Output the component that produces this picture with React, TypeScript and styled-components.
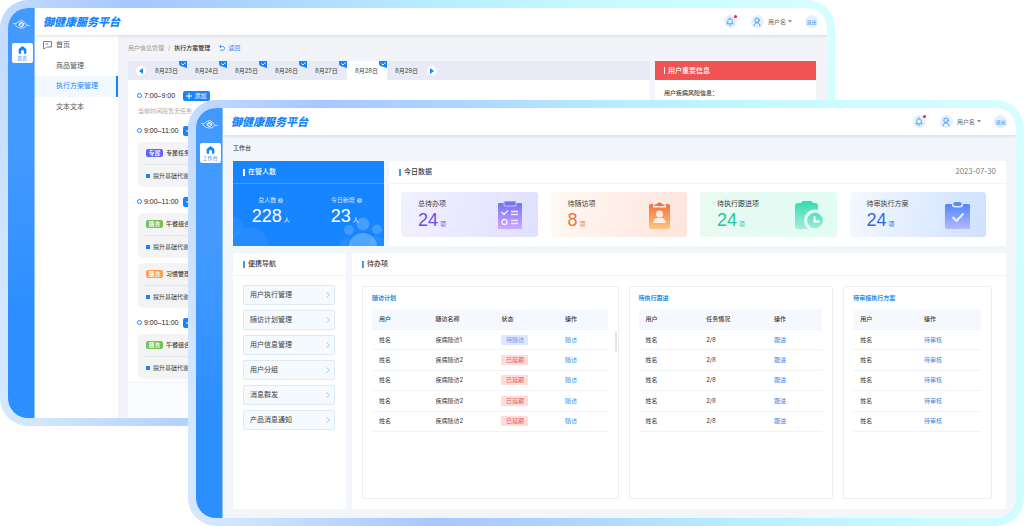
import React from "react";
import styled, { createGlobalStyle } from "styled-components";

const GlobalStyle = createGlobalStyle`
  *, *::before, *::after { box-sizing: border-box; }
  body {
    margin: 0;
    background: #fff;
    color: #3a3a3a;
    font: 6px/10px Inter, "Noto Sans CJK SC", sans-serif;
  }
  a { color: inherit; text-decoration: none; }
  button { font: inherit; color: inherit; border: 0; background: none; padding: 0; cursor: pointer; }
  h1, h2, h3, p, ul { margin: 0; padding: 0; font: inherit; list-style: none; }
  svg { display: block; flex: none; }
`;

const blue = "#1785ff";

/* ---------- Window frame ---------- */

const Stage = styled.div`
  display: grid;
  grid-template-columns: 188px minmax(0, 1fr) 189px;
  grid-template-rows: 100px minmax(326px, auto) 100px;
`;

const Frame = styled.div<{ $front?: boolean }>`
  grid-area: ${(p) => (p.$front ? "2 / 2 / 4 / 4" : "1 / 1 / 3 / 3")};
  z-index: ${(p) => (p.$front ? 1 : 0)};
  display: grid;
  padding: 8px;
  border-radius: 28px;
  background: linear-gradient(75deg, #d4e8ff 0%, #d0e5ff 5%, #a6c7ff 26%, #aed8ff 42%, #b9edff 58%, #c8fbff 77%, #d6feff 100%);
`;

const Screen = styled.div`
  display: flex;
  min-width: 0;
  overflow: hidden;
  border-radius: 20px;
  background: #f2f5fa;
`;

const Rail = styled.nav`
  display: flex;
  flex-direction: column;
  align-items: center;
  gap: 14px;
  flex: 0 0 27px;
  padding-top: 12px;
  background: linear-gradient(#429aff 35%, #2d8eff 75%);
  border-right: 1px solid #8fc3ff;
`;

const RailLink = styled.a`
  display: flex;
  flex-direction: column;
  align-items: center;
  justify-content: center;
  gap: 1px;
  width: 21px;
  height: 20px;
  margin-left: 2px;
  border-radius: 2px;
  background: #fff;
  color: ${blue};
  font-size: 5px;
  line-height: 6px;
`;

const Page = styled.div`
  display: flex;
  flex-direction: column;
  flex: 1;
  min-width: 0;
`;

const TopBar = styled.header`
  display: flex;
  align-items: center;
  flex: 0 0 27px;
  padding: 0 9px 0 8px;
  background: #fff;
  box-shadow: 0 1px 3px rgba(40, 60, 110, 0.16);
  z-index: 1;
`;

const Brand = styled.h1`
  flex: 1;
  color: ${blue};
  font-size: 11px;
  line-height: 16px;
  font-weight: 900;
  font-style: italic;
`;

const RoundButton = styled.button`
  position: relative;
  display: grid;
  place-items: center;
  width: 13px;
  height: 13px;
  border-radius: 50%;
  background: #e3f0ff;
  color: #2f8ffb;
  font-size: 5px;
  line-height: 6px;
  white-space: nowrap;
`;

const Dot = styled.span`
  position: absolute;
  top: 0;
  right: 0;
  width: 3px;
  height: 3px;
  border-radius: 50%;
  background: #f5222d;
`;

const Account = styled.div`
  display: flex;
  align-items: center;
  gap: 4px;
  margin: 0 13px 0 14px;
  color: #666;
`;

const NameButton = styled.button`
  display: flex;
  align-items: center;
  gap: 2px;
  color: #666;
`;

const EyeLogo = () => (
  <svg width="17" height="9" viewBox="0 0 34 18" fill="none" stroke="#fff" strokeLinecap="round" aria-hidden="true">
    <path d="M1 7c5 1 6 0 9-3 5-4 12-3 14 2 2 4 5 6 9 5" strokeWidth="1.6" opacity=".9" />
    <path d="M3 9c4 4 8 7 14 7 5 0 8-2 10-5" strokeWidth="1.6" opacity=".9" />
    <path d="M12 9c0-3 3-4.500 6-4 4 .5 5 5 2 7-3 1.600-7 .5-7-2 0-2 2-3 4-2.700 2 .3 2.500 2 1 3" strokeWidth="2" />
  </svg>
);

const HomeIcon = () => (
  <svg width="9" height="8" viewBox="0 0 18 16" fill={blue} aria-hidden="true">
    <path d="M9 .5c.6 0 1 .2 1.400.5l5.500 4.600c.5.4.8 1 .8 1.600V14c0 .8-.6 1.500-1.500 1.500H12V11c0-1.700-1.300-3-3-3s-3 1.300-3 3v4.500H2.800c-.9 0-1.500-.7-1.500-1.500V7.200c0-.6.3-1.200.8-1.600L7.600 1C8 .7 8.400.5 9 .5z" />
  </svg>
);

const BellIcon = () => (
  <svg width="8" height="9" viewBox="0 0 16 18" fill="none" stroke="currentColor" strokeWidth="1.500" aria-hidden="true">
    <path d="M3.500 13V8a4.500 4.500 0 0 1 9 0v5M1.500 13.500h13M8 1.500v2M6.500 16h3" strokeLinecap="round" />
  </svg>
);

const PersonIcon = () => (
  <svg width="8" height="10" viewBox="0 0 16 20" fill="none" stroke="currentColor" strokeWidth="1.700" strokeLinecap="round" aria-hidden="true">
    <circle cx="8" cy="6.500" r="4.500" />
    <path d="M2 18c.3-4 2.500-6.500 6-6.500s5.700 2.500 6 6.500" />
  </svg>
);

const Caret = () => (
  <svg width="4" height="3" viewBox="0 0 4 3" fill="#888" aria-hidden="true">
    <path d="M0 0h4L2 2.500z" />
  </svg>
);

const Shell = ({ front, railLabel, children }: { front?: boolean; railLabel: string; children: React.ReactNode }) => (
  <Frame $front={front}>
    <Screen>
      <Rail>
        <EyeLogo />
        <RailLink href="#home">
          <HomeIcon />
          {railLabel}
        </RailLink>
      </Rail>
      <Page>
        <TopBar>
          <Brand>御健康服务平台</Brand>
          <RoundButton aria-label="通知">
            <BellIcon />
            <Dot />
          </RoundButton>
          <Account>
            <RoundButton aria-label="账户">
              <PersonIcon />
            </RoundButton>
            <NameButton>
              用户名
              <Caret />
            </NameButton>
          </Account>
          <RoundButton>退出</RoundButton>
        </TopBar>
        {children}
      </Page>
    </Screen>
  </Frame>
);

/* ---------- Plan management (back window) ---------- */

const PlanLayout = styled.div`
  display: flex;
  flex: 1;
  min-height: 0;
  background: #f3f4fa;
`;

const SideMenu = styled.nav`
  flex: 0 0 83px;
  background: #fff;
`;

const MenuList = styled.ul`
  display: grid;
  grid-auto-rows: 1fr;
  height: 82px;
`;

const MenuLink = styled.a<{ $active?: boolean }>`
  display: grid;
  grid-template-columns: 13px 1fr;
  align-items: center;
  height: 100%;
  padding-left: 8px;
  font-size: 7px;
  color: ${(p) => (p.$active ? blue : "#555")};
  background: ${(p) => (p.$active ? "#f2f8ff" : "transparent")};
  border-right: 2px solid ${(p) => (p.$active ? blue : "transparent")};
  span { grid-column: 2; }
`;

const PlanMain = styled.main`
  display: flex;
  flex-direction: column;
  flex: 1;
  min-width: 0;
  padding: 0 11px 0 10px;
`;

const Crumbs = styled.nav`
  display: flex;
  align-items: center;
  gap: 4px;
  height: 26px;
  color: #999;
  strong { color: #333; font-weight: 500; }
`;

const BackLink = styled.a`
  display: flex;
  align-items: center;
  gap: 3px;
  margin-left: 5px;
  color: #3a93f8;
`;

const PlanColumns = styled.div`
  display: grid;
  grid-template-columns: minmax(0, 1fr) 161px;
  gap: 5px;
  flex: 1;
`;

const Sheet = styled.section`
  display: flex;
  flex-direction: column;
  background: #fff;
`;

const DayBar = styled.div`
  display: flex;
  align-items: center;
  height: 19px;
  padding-left: 8px;
  background: #e8ebf5;
`;

const DayTab = styled.button<{ $active?: boolean }>`
  position: relative;
  width: 40px;
  height: 19px;
  padding-left: 8px;
  text-align: left;
  color: #444;
  background: ${(p) => (p.$active ? "#fff" : "transparent")};
  svg { position: absolute; top: 0; right: 0; }
`;

const StepButton = styled.button`
  display: grid;
  place-items: center;
  width: 10px;
  height: 10px;
  margin: 0 1px 0 0;
  border-radius: 50%;
  background: #fff;
`;

const Timeline = styled.div`
  display: flex;
  flex-direction: column;
  gap: 9px;
  padding: 10px 10px 3px;
`;

const SlotHead = styled.div`
  display: grid;
  grid-template-columns: 6px 39px auto 1fr;
  align-items: center;
  height: 11px;
  font: 7px/11px "Liberation Sans", "Noto Sans CJK SC", sans-serif;
  color: #222;
`;

const Ring = styled.i`
  width: 5px;
  height: 5px;
  border: 1px solid ${blue};
  border-radius: 50%;
  margin-left: -1px;
`;

const AddButton = styled.button`
  display: flex;
  align-items: center;
  justify-content: center;
  gap: 2px;
  width: 27px;
  height: 10px;
  border-radius: 2px;
  background: ${blue};
  color: #fff;
  font: 6px/10px "Noto Sans CJK SC", sans-serif;
`;

const SlotNote = styled.p`
  margin-top: 5px;
  color: #aaa;
`;

const TaskList = styled.ul`
  display: grid;
  gap: 5px;
  margin-top: 6px;
`;

const TaskCard = styled.li`
  height: 45px;
  padding: 0 6px;
  border-radius: 5px;
  background: #f4f4f7;
`;

const TaskRow = styled.div`
  display: flex;
  align-items: center;
  gap: 3px;
  height: 22px;
  padding-left: 2px;
  font-weight: 500;
  & + & { border-top: 1px solid #e6e6ea; font-weight: 400; height: 23px; }
`;

const Tag = styled.span<{ $color: string }>`
  width: 17px;
  height: 8px;
  border-radius: 2px;
  background: ${(p) => p.$color};
  color: #fff;
  font-size: 6px;
  line-height: 8px;
  text-align: center;
`;

const Square = styled.i`
  width: 4px;
  height: 4px;
  background: ${blue};
`;

const SheetFoot = styled.div`
  flex: 1;
  border-top: 1px solid #edf2fa;
  background: #fafcff;
`;

const AlertHead = styled.h2`
  display: flex;
  align-items: center;
  gap: 3px;
  height: 19px;
  padding-left: 9px;
  background: #ef5354;
  color: #fff;
  font-size: 7px;
  font-weight: 500;
  &::before { content: ""; width: 1px; height: 7px; background: #fff; }
`;

const AlertText = styled.p`
  padding: 8px 9px;
  font-weight: 500;
`;

const Flag = () => (
  <svg width="8" height="7" viewBox="0 0 16 14" aria-hidden="true">
    <path d="M0 0h16v14L3 10C1 9 0 7 0 5z" fill={blue} />
    <path d="M5 5l3 3 5-5" fill="none" stroke="#fff" strokeWidth="1.800" />
  </svg>
);

const Arrow = ({ flip }: { flip?: boolean }) => (
  <svg width="4" height="6" viewBox="0 0 4 6" fill={blue} aria-hidden="true">
    <path d={flip ? "M0 0l4 3-4 3z" : "M4 0L0 3l4 3z"} />
  </svg>
);

const PlusIcon = () => (
  <svg width="6" height="6" viewBox="0 0 6 6" stroke="#fff" aria-hidden="true">
    <path d="M3 0v6M0 3h6" />
  </svg>
);

const menu = ["首页", "商品管理", "执行方案管理", "文本文本"];
const days = ["8月23日", "8月24日", "8月25日", "8月26日", "8月27日", "8月28日", "8月29日"];
const slots = [
  { time: "7:00–9:00", tasks: [] },
  { time: "9:00–11:00", tasks: [{ tag: "专属", color: "#5b63ff", name: "专属任务" }] },
  {
    time: "9:00–11:00",
    tasks: [
      { tag: "膳食", color: "#6dc252", name: "午餐组合" },
      { tag: "膳食", color: "#ff9c50", name: "习惯管理" },
    ],
  },
  { time: "9:00–11:00", tasks: [{ tag: "膳食", color: "#6dc252", name: "午餐组合" }] },
];

const PlanWindow = () => (
  <Shell railLabel="首页">
    <PlanLayout>
      <SideMenu>
        <MenuList>
          {menu.map((m, i) => (
            <li key={m}>
              <MenuLink href="#menu" $active={i === 2}>
                {i === 0 && (
                  <svg width="9" height="8" viewBox="0 0 18 16" fill="none" stroke="#555" strokeWidth="1.500" aria-hidden="true">
                    <path d="M1 1h16v11H7l-3 3H1zM5 6h5" />
                  </svg>
                )}
                <span>{m}</span>
              </MenuLink>
            </li>
          ))}
        </MenuList>
      </SideMenu>
      <PlanMain>
        <Crumbs>
          <a href="#users">用户信息管理</a>
          <span>/</span>
          <strong>执行方案管理</strong>
          <BackLink href="#back">
            <svg width="6" height="6" viewBox="0 0 12 12" fill="none" stroke="currentColor" strokeWidth="1.800" aria-hidden="true">
              <path d="M4 0L1 3l3 3M1 3h6.500a3.500 3.500 0 0 1 0 7.500H2" />
            </svg>
            返回
          </BackLink>
        </Crumbs>
        <PlanColumns>
          <Sheet>
            <DayBar>
              <StepButton aria-label="前一天">
                <Arrow />
              </StepButton>
              {days.map((d, i) => (
                <DayTab key={d} $active={i === 5}>
                  {d}
                  {i < 6 && <Flag />}
                </DayTab>
              ))}
              <StepButton aria-label="后一天">
                <Arrow flip />
              </StepButton>
            </DayBar>
            <Timeline>
              {slots.map((s, i) => (
                <section key={i}>
                  <SlotHead>
                    <Ring />
                    {s.time}
                    <AddButton>
                      <PlusIcon />
                      添加
                    </AddButton>
                  </SlotHead>
                  {s.tasks.length === 0 ? (
                    <SlotNote>当前时间段暂无任务</SlotNote>
                  ) : (
                    <TaskList>
                      {s.tasks.map((t) => (
                        <TaskCard key={t.name}>
                          <TaskRow>
                            <Tag $color={t.color}>{t.tag}</Tag>
                            {t.name}
                          </TaskRow>
                          <TaskRow>
                            <Square />
                            提升基础代谢
                          </TaskRow>
                        </TaskCard>
                      ))}
                    </TaskList>
                  )}
                </section>
              ))}
            </Timeline>
            <SheetFoot />
          </Sheet>
          <Sheet>
            <AlertHead>用户重要信息</AlertHead>
            <AlertText>用户疾病风险信息：</AlertText>
          </Sheet>
        </PlanColumns>
      </PlanMain>
    </PlanLayout>
  </Shell>
);

/* ---------- Workbench (front window) ---------- */

const Bench = styled.main`
  display: flex;
  flex-direction: column;
  flex: 1;
  padding: 0 10px 9px;
`;

const BenchTitle = styled.h2`
  line-height: 26px;
  font-weight: 500;
`;

const TopRow = styled.div`
  display: grid;
  grid-template-columns: 151px minmax(0, 1fr);
  gap: 5px;
  height: 85px;
`;

const BottomRow = styled.div`
  display: grid;
  grid-template-columns: 113px minmax(0, 1fr);
  gap: 6px;
  flex: 1;
  margin-top: 7px;
`;

const Card = styled.section<{ $solid?: boolean }>`
  position: relative;
  display: flex;
  flex-direction: column;
  overflow: hidden;
  color: ${(p) => (p.$solid ? "#fff" : "#3a3a3a")};
  background: ${(p) => (p.$solid ? blue : "#fff")};
`;

const CardHead = styled.header<{ $solid?: boolean }>`
  display: flex;
  align-items: center;
  gap: 3px;
  height: 23px;
  padding: 0 10px;
  border-bottom: 1px solid ${(p) => (p.$solid ? "#459eff" : "#f3f4f6")};
  font-size: 7px;
  &::before { content: ""; width: 2px; height: 7px; background: ${(p) => (p.$solid ? "#fff" : "#3c9cf5")}; }
  h3 { flex: 1; font-weight: 500; }
  time { color: #777; }
`;

const Counts = styled.div`
  display: grid;
  grid-template-columns: 1fr 1fr;
  justify-items: center;
  padding-top: 11px;
  z-index: 1;
`;

const CountLabel = styled.p`
  display: flex;
  align-items: center;
  justify-content: center;
  gap: 2px;
  color: #d6e9ff;
`;

const Figure = styled.p<{ $fill?: string }>`
  font: 18px/22px "Liberation Sans", sans-serif;
  color: ${(p) => p.$fill || "#fff"};
  small { margin-left: 2px; font: 6px/10px "Noto Sans CJK SC", sans-serif; }
`;

const Backdrop = styled.svg<{ $side: "left" | "right" }>`
  position: absolute;
  bottom: 0;
  ${(p) => p.$side}: 0;
`;

const Stats = styled.div`
  display: grid;
  grid-template-columns: repeat(4, minmax(0, 1fr));
  gap: 13px;
  flex: 1;
  padding: 8px 20px 9px 12px;
`;

const Stat = styled.a<{ $bg: string }>`
  display: flex;
  align-items: center;
  justify-content: space-between;
  padding: 0 14px 0 17px;
  border-radius: 3px;
  background: linear-gradient(100deg, ${(p) => p.$bg});
  font-size: 7px;
`;

const NavList = styled.ul`
  display: grid;
  gap: 5px;
  padding: 9px 11px 0 10px;
`;

const NavLink = styled.a`
  display: flex;
  align-items: center;
  justify-content: space-between;
  height: 20px;
  padding: 0 4px 0 6px;
  border: 1px solid #d9ebfa;
  border-radius: 2px;
  background: #f5faff;
  font-size: 7px;
`;

const Panels = styled.div`
  display: grid;
  grid-template-columns: 257fr 205fr 149fr;
  gap: 10px;
  flex: 1;
  padding: 10px 14px 10px 10px;
`;

const Panel = styled.section`
  position: relative;
  min-width: 0;
  padding: 6px 10px 10px 9px;
  border: 1px solid #eceef1;
  border-radius: 2px;
  h3 { height: 16px; color: #2a8be6; font-weight: 700; }
`;

const Thumb = styled.i`
  position: absolute;
  top: 44px;
  right: 1px;
  width: 2px;
  height: 21px;
  border-radius: 1px;
  background: #e3e5e9;
`;

const Table = styled.table`
  width: 100%;
  height: 123px;
  table-layout: fixed;
  border-collapse: separate;
  border-spacing: 0;
  text-align: left;
  th, td { padding: 0 0 0 7px; border-bottom: 1px solid #f2f3f5; }
  thead, thead tr, th { height: 21px; }
  th { background: #f5f9ff; font-weight: 500; }
  a { color: #2a8be6; }
`;

const Badge = styled.span<{ $late?: boolean }>`
  display: block;
  width: 27px;
  height: 10px;
  border-radius: 1px;
  text-align: center;
  color: ${(p) => (p.$late ? "#e0605f" : "#6a90ee")};
  background: ${(p) => (p.$late ? "#ffdcdc" : "#dfe8ff")};
`;

const InfoDot = () => (
  <svg width="5" height="5" viewBox="0 0 10 10" aria-hidden="true">
    <circle cx="5" cy="5" r="5" fill="#9dcbff" />
    <path d="M4 2.500L7 5 4 7.500" fill="none" stroke="#3c95ff" strokeWidth="1.500" />
  </svg>
);

const Fade = ({ id, from, to }: { id: string; from: string; to: string }) => (
  <defs>
    <linearGradient id={id} x1="0" y1="0" x2="0" y2="1">
      <stop offset="0" stopColor={from} />
      <stop offset="1" stopColor={to} />
    </linearGradient>
  </defs>
);

const ChecklistIcon = () => (
  <svg width="28" height="28" viewBox="0 0 28 28" aria-hidden="true">
    <Fade id="violet" from="#7472f4" to="#cfa9fd" />
    <path d="M3 2h22a1 1 0 0 1 1 1v24a1 1 0 0 1-1 1H3a1 1 0 0 1-1-1V3a1 1 0 0 1 1-1z" fill="url(#violet)" />
    <path d="M8 0h12v5H8z" fill="#7472f4" stroke="#c9c6fb" strokeWidth="1" />
    <g fill="none" stroke="#eeeaff" strokeWidth="1.500">
      <path d="M5.500 11l2.500 2.500 4-4M15 10.500h7M15 13.500h7M15 19.500h7M15 22.500h7" />
      <circle cx="8.500" cy="21" r="2.500" />
    </g>
  </svg>
);

const VisitIcon = () => (
  <svg width="28" height="28" viewBox="0 0 28 28" aria-hidden="true">
    <Fade id="amber" from="#f4703c" to="#ffc67c" />
    <rect x="4" y="3" width="21" height="25" rx="2" fill="url(#amber)" />
    <path d="M8 6.500V4.500c0-1 .8-1.500 1.800-1.500h.7a4 4 0 0 1 8 0h.7c1 0 1.800.5 1.800 1.500v2z" fill="#fdeae3" />
    <path d="M9 5c0-1 1-1.500 2.500-1.500a3.200 3.200 0 0 1 6 0C19 3.500 20 4 20 5z" fill="#f4703c" />
    <circle cx="14.500" cy="13" r="3.500" fill="#fdeee6" />
    <path d="M8.500 22c-.5-2.800 1.500-4.500 4-5h4c2.500.5 4.500 2.200 4 5z" fill="#fdeee6" />
  </svg>
);

const FollowIcon = () => (
  <svg width="28" height="28" viewBox="0 0 28 28" aria-hidden="true">
    <Fade id="mint" from="#2fddb0" to="#a9ecd9" />
    <Fade id="mintClock" from="#4fe0bb" to="#a4ead9" />
    <path d="M6 2a3 3 0 0 1 3-2h6a3 3 0 0 1 3 2h2a3 3 0 0 1 3 3v22a1 1 0 0 1-1 1H3a3 3 0 0 1-3-3V5a3 3 0 0 1 3-3z" fill="url(#mint)" />
    <circle cx="20" cy="19.500" r="11" fill="#e3fbf4" />
    <circle cx="20" cy="19.500" r="7.800" fill="url(#mintClock)" />
    <path d="M19.500 15v5.500h5" fill="none" stroke="#fff" strokeWidth="1.800" />
  </svg>
);

const ReviewIcon = () => (
  <svg width="28" height="28" viewBox="0 0 28 28" aria-hidden="true">
    <Fade id="azure" from="#4f86fb" to="#b3bafc" />
    <rect x="1" y="3" width="25" height="25" rx="1.500" fill="url(#azure)" />
    <rect x="8.500" y=".2" width="10" height="5.600" rx="2.800" fill="#5a8dfb" stroke="#dfe9ff" strokeWidth="1.400" />
    <path d="M8.500 16l4 4 7-7.500" fill="none" stroke="#e8efff" strokeWidth="2" />
  </svg>
);

const stats = [
  { label: "总待办项", value: 24, bg: "#f2f1ff, #dfe0ff", fill: "#6a4df0", icon: <ChecklistIcon /> },
  { label: "待随访项", value: 8, bg: "#fffaf3, #fde4dd", fill: "#f4703c", icon: <VisitIcon /> },
  { label: "待执行跟进项", value: 24, bg: "#eafaf1, #e1fdf5", fill: "#22c79c", icon: <FollowIcon /> },
  { label: "待审执行方案", value: 24, bg: "#f4f8ff, #cfe1ff", fill: "#2f69e6", icon: <ReviewIcon /> },
];

const shortcuts = ["用户执行管理", "随访计划管理", "用户信息管理", "用户分组", "消息群发", "产品消息通知"];
const rows = [1, 2, 3, 4, 5];

const DataTable = ({ heads, widths, cells }: { heads: string[]; widths: string[]; cells: (row: number) => React.ReactNode[] }) => (
  <Table>
    <colgroup>
      {widths.map((w, i) => (
        <col key={i} width={w} />
      ))}
    </colgroup>
    <thead>
      <tr>
        {heads.map((h) => (
          <th key={h} scope="col">{h}</th>
        ))}
      </tr>
    </thead>
    <tbody>
      {rows.map((r) => (
        <tr key={r}>
          {cells(r).map((c, i) => (
            <td key={i}>{c}</td>
          ))}
        </tr>
      ))}
    </tbody>
  </Table>
);

const BenchWindow = () => (
  <Shell front railLabel="工作台">
    <Bench>
      <BenchTitle>工作台</BenchTitle>
      <TopRow>
        <Card $solid>
          <Backdrop $side="left" width="35" height="32" viewBox="0 0 35 32" fill="#fff" aria-hidden="true">
            <circle cx="0" cy="12" r="10" opacity=".06" />
            <circle cx="16" cy="32" r="19" opacity=".06" />
          </Backdrop>
          <Backdrop $side="right" width="46" height="30" viewBox="0 0 46 30" fill="#8cc5ff" aria-hidden="true">
            <circle cx="25" cy="8" r="6.500" opacity=".4" />
            <circle cx="11" cy="14" r="5" opacity=".35" />
            <circle cx="39" cy="13.500" r="5" opacity=".35" />
            <path d="M11 30c0-7 6-13 14-13s14 6 14 13z" opacity=".5" />
            <circle cx="8" cy="29" r="7" opacity=".12" />
            <circle cx="39" cy="28" r="8" opacity=".12" />
          </Backdrop>
          <CardHead $solid>
            <h3>在管人数</h3>
          </CardHead>
          <Counts>
            <div>
              <CountLabel>总人数 <InfoDot /></CountLabel>
              <Figure>228<small>人</small></Figure>
            </div>
            <div>
              <CountLabel>今日新增 <InfoDot /></CountLabel>
              <Figure>23<small>人</small></Figure>
            </div>
          </Counts>
        </Card>
        <Card>
          <CardHead>
            <h3>今日数据</h3>
            <time dateTime="2023-07-30">2023-07-30</time>
          </CardHead>
          <Stats>
            {stats.map((s) => (
              <Stat key={s.label} href="#stat" $bg={s.bg}>
                <div>
                  <p>{s.label}</p>
                  <Figure $fill={s.fill}>{s.value}<small>项</small></Figure>
                </div>
                {s.icon}
              </Stat>
            ))}
          </Stats>
        </Card>
      </TopRow>
      <BottomRow>
        <Card>
          <CardHead>
            <h3>便携导航</h3>
          </CardHead>
          <NavList>
            {shortcuts.map((s) => (
              <li key={s}>
                <NavLink href="#go">
                  {s}
                  <svg width="4" height="6" viewBox="0 0 8 12" fill="none" stroke="#9bb8d8" strokeWidth="1.500" aria-hidden="true">
                    <path d="M1 1l6 5-6 5" />
                  </svg>
                </NavLink>
              </li>
            ))}
          </NavList>
        </Card>
        <Card>
          <CardHead>
            <h3>待办项</h3>
          </CardHead>
          <Panels>
            <Panel>
              <h3>随访计划</h3>
              <DataTable
                heads={["用户", "随访名称", "状态", "操作"]}
                widths={["24%", "28%", "27%", "21%"]}
                cells={(r) => [
                  "姓名",
                  r === 1 ? "疾病随访1" : "疾病随访2",
                  <Badge $late={r > 1}>{r === 1 ? "待随访" : "已延期"}</Badge>,
                  <a href="#visit">随访</a>,
                ]}
              />
              <Thumb />
            </Panel>
            <Panel>
              <h3>待执行跟进</h3>
              <DataTable
                heads={["用户", "任务情况", "操作"]}
                widths={["33%", "37%", "30%"]}
                cells={() => ["姓名", "2/8", <a href="#follow">跟进</a>]}
              />
            </Panel>
            <Panel>
              <h3>待审核执行方案</h3>
              <DataTable heads={["用户", "操作"]} widths={["50%", "50%"]} cells={() => ["姓名", <a href="#review">待审核</a>]} />
            </Panel>
          </Panels>
        </Card>
      </BottomRow>
    </Bench>
  </Shell>
);

export default function App() {
  return (
    <>
      <GlobalStyle />
      <Stage>
        <PlanWindow />
        <BenchWindow />
      </Stage>
    </>
  );
}
